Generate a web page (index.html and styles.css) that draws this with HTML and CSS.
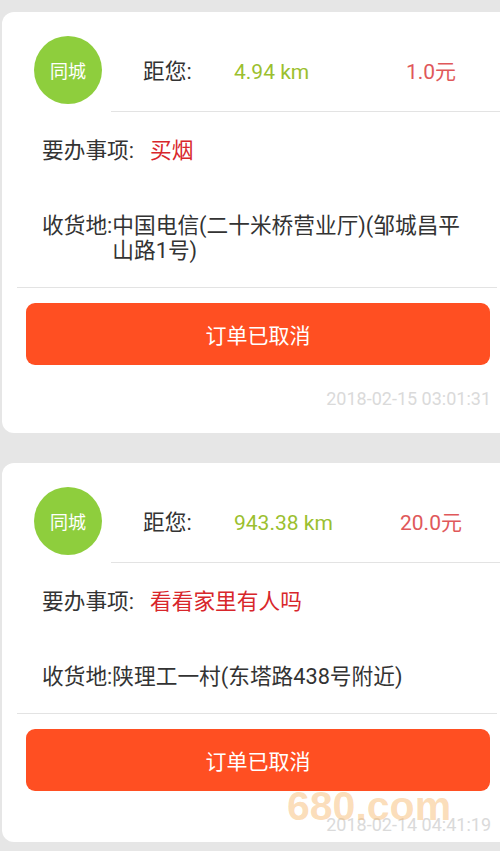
FILE: index.html
```html
<!DOCTYPE html>
<html lang="zh-CN">
<head>
<meta charset="utf-8">
<title>订单列表</title>
<link rel="stylesheet" href="styles.css">
</head>
<body>
<div class="list">
  <div class="card">
    <div class="head">
      <div class="badge">同城</div>
      <div class="info">
        <span class="info-label">距您:</span>
        <span class="distance">4.94 km</span>
        <span class="price">1.0元</span>
      </div>
    </div>
    <div class="row row-todo">
      <span class="todo-label">要办事项:</span>
      <span class="todo-value">买烟</span>
    </div>
    <div class="row row-addr">
      <span class="addr-label">收货地:</span>
      <span class="addr-value">中国电信(二十米桥营业厅)(邹城昌平山路1号)</span>
    </div>
    <div class="divider"></div>
    <div class="btn">订单已取消</div>
    <div class="time">2018-02-15 03:01:31</div>
  </div>
  <div class="card card-last">
    <div class="head">
      <div class="badge">同城</div>
      <div class="info">
        <span class="info-label">距您:</span>
        <span class="distance">943.38 km</span>
        <span class="price">20.0元</span>
      </div>
    </div>
    <div class="row row-todo">
      <span class="todo-label">要办事项:</span>
      <span class="todo-value">看看家里有人吗</span>
    </div>
    <div class="row row-addr">
      <span class="addr-label">收货地:</span>
      <span class="addr-value">陕理工一村(东塔路438号附近)</span>
    </div>
    <div class="divider"></div>
    <div class="btn">订单已取消</div>
    <div class="time">2018-02-14 04:41:19</div>
  </div>
</div>
<div class="watermark">680.com</div>
</body>
</html>
```
FILE: styles.css
```css
html, body {
  margin: 0;
  padding: 0;
}
body {
  width: 500px;
  height: 851px;
  background: #e6e6e6;
  overflow: hidden;
  position: relative;
  font-family: Roboto, "Noto Sans CJK SC", sans-serif;
  color: #333;
}
.list {
  display: flex;
  flex-direction: column;
  gap: 30px;
  padding-top: 12px;
}
.card {
  margin-left: 2px;
  background: #fff;
  border-radius: 12px 0 0 12px;
  padding-bottom: 21px;
}
.card-last {
  padding-bottom: 4px;
}
.head {
  display: flex;
  height: 100px;
}
.badge {
  width: 68px;
  height: 68px;
  margin: 24px 0 0 32px;
  border-radius: 50%;
  background: #8ece3d;
  color: #fff;
  font-size: 18px;
  display: flex;
  align-items: center;
  justify-content: center;
}
.info {
  flex: 1;
  margin-left: 9px;
  padding-top: 16px;
  border-bottom: 1px solid #e3e3e3;
  display: flex;
  align-items: baseline;
  align-content: center;
  flex-wrap: wrap;
  font-size: 21.7px;
}
.info-label {
  margin-left: 32px;
  width: 91px;
  color: #333;
}
.distance {
  width: 128px;
  color: #9bbf2f;
  font-size: 21px;
}
.price {
  flex: 1;
  text-align: center;
  color: #e0585a;
  font-size: 21px;
}
.row {
  display: flex;
  padding-left: 40px;
  padding-right: 30px;
  font-size: 21.7px;
  line-height: 25px;
}
.row-todo {
  margin-top: 26px;
}
.todo-label {
  width: 108px;
}
.todo-value {
  color: #d8262b;
}
.row-addr {
  margin-top: 50px;
}
.addr-value {
  flex: 1;
}
.divider {
  margin: 24px 3px 0 15px;
  height: 1px;
  background: #e3e3e3;
}
.btn {
  margin: 15px 10px 0 24px;
  height: 62px;
  border-radius: 9px;
  background: #ff4f22;
  color: #fff;
  font-size: 21px;
  display: flex;
  align-items: center;
  justify-content: center;
}
.time {
  margin-top: 21px;
  padding-right: 9px;
  text-align: right;
  font-size: 18px;
  line-height: 26px;
  color: #dadada;
}
.watermark {
  position: absolute;
  left: 287px;
  top: 783px;
  font-family: "Liberation Sans", Arial, sans-serif;
  font-weight: bold;
  font-size: 41px;
  line-height: 46px;
  color: rgba(247, 180, 100, 0.45);
}
```
